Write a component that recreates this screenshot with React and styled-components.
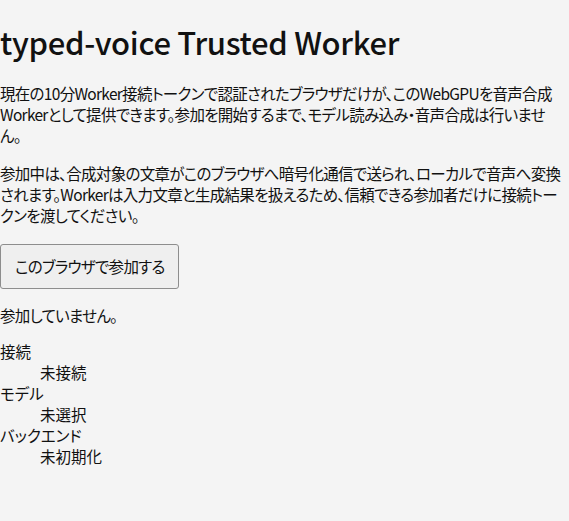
import React from "react";
import styled, { createGlobalStyle } from "styled-components";

const GlobalStyle = createGlobalStyle`
  html, body {
    margin: 0;
    padding: 0;
    background: #f4f4f4;
  }
  body {
    color: #111111;
    font-family: "Noto Sans CJK JP", "Noto Sans", sans-serif;
    font-feature-settings: "palt";
    font-size: 15.5px;
    line-height: 21.2px;
    letter-spacing: -0.7px;
  }
`;

const status = [
  { label: "接続", value: "未接続" },
  { label: "モデル", value: "未選択" },
  { label: "バックエンド", value: "未初期化" }
];

export default function App() {
  return (
    <>
      <GlobalStyle />
      <Page>
        <Title>typed-voice Trusted Worker</Title>
        <Text>
          現在の10分Worker接続トークンで認証されたブラウザだけが、このWebGPUを音声合成Workerとして提供できます。参加を開始するまで、モデル読み込み・音声合成は行いません。
        </Text>
        <Text>
          参加中は、合成対象の文章がこのブラウザへ暗号化通信で送られ、ローカルで音声へ変換されます。Workerは入力文章と生成結果を扱えるため、信頼できる参加者だけに接続トークンを渡してください。
        </Text>
        <JoinButton type="button">このブラウザで参加する</JoinButton>
        <StatusText>参加していません。</StatusText>
        <StatusList>
          {status.map((item) => (
            <React.Fragment key={item.label}>
              <dt>{item.label}</dt>
              <dd>{item.value}</dd>
            </React.Fragment>
          ))}
        </StatusList>
      </Page>
    </>
  );
}

const Page = styled.main`
  display: block;
  padding-right: 4px;
`;

const Title = styled.h1`
  font-size: 31px;
  font-weight: 500;
  line-height: 42px;
  letter-spacing: -0.3px;
  margin: 21px 0 20px;
`;

const Text = styled.p`
  margin: 16px 0;
`;

const StatusText = styled(Text)`
  margin-bottom: 14px;
`;

const JoinButton = styled.button`
  display: block;
  margin: 18px 0 16px;
  font: inherit;
  font-feature-settings: "palt";
  letter-spacing: -0.7px;
  color: #111111;
  background: #efefef;
  border: 1px solid #8d8d8d;
  border-radius: 3px;
  padding: 11px 13px 11px 14px;
`;

const StatusList = styled.dl`
  margin: 12px 0 16px;
  line-height: 21px;
  letter-spacing: 0;
  dt {
    margin: 0;
  }
  dd {
    margin: 0 0 0 40px;
  }
`;
